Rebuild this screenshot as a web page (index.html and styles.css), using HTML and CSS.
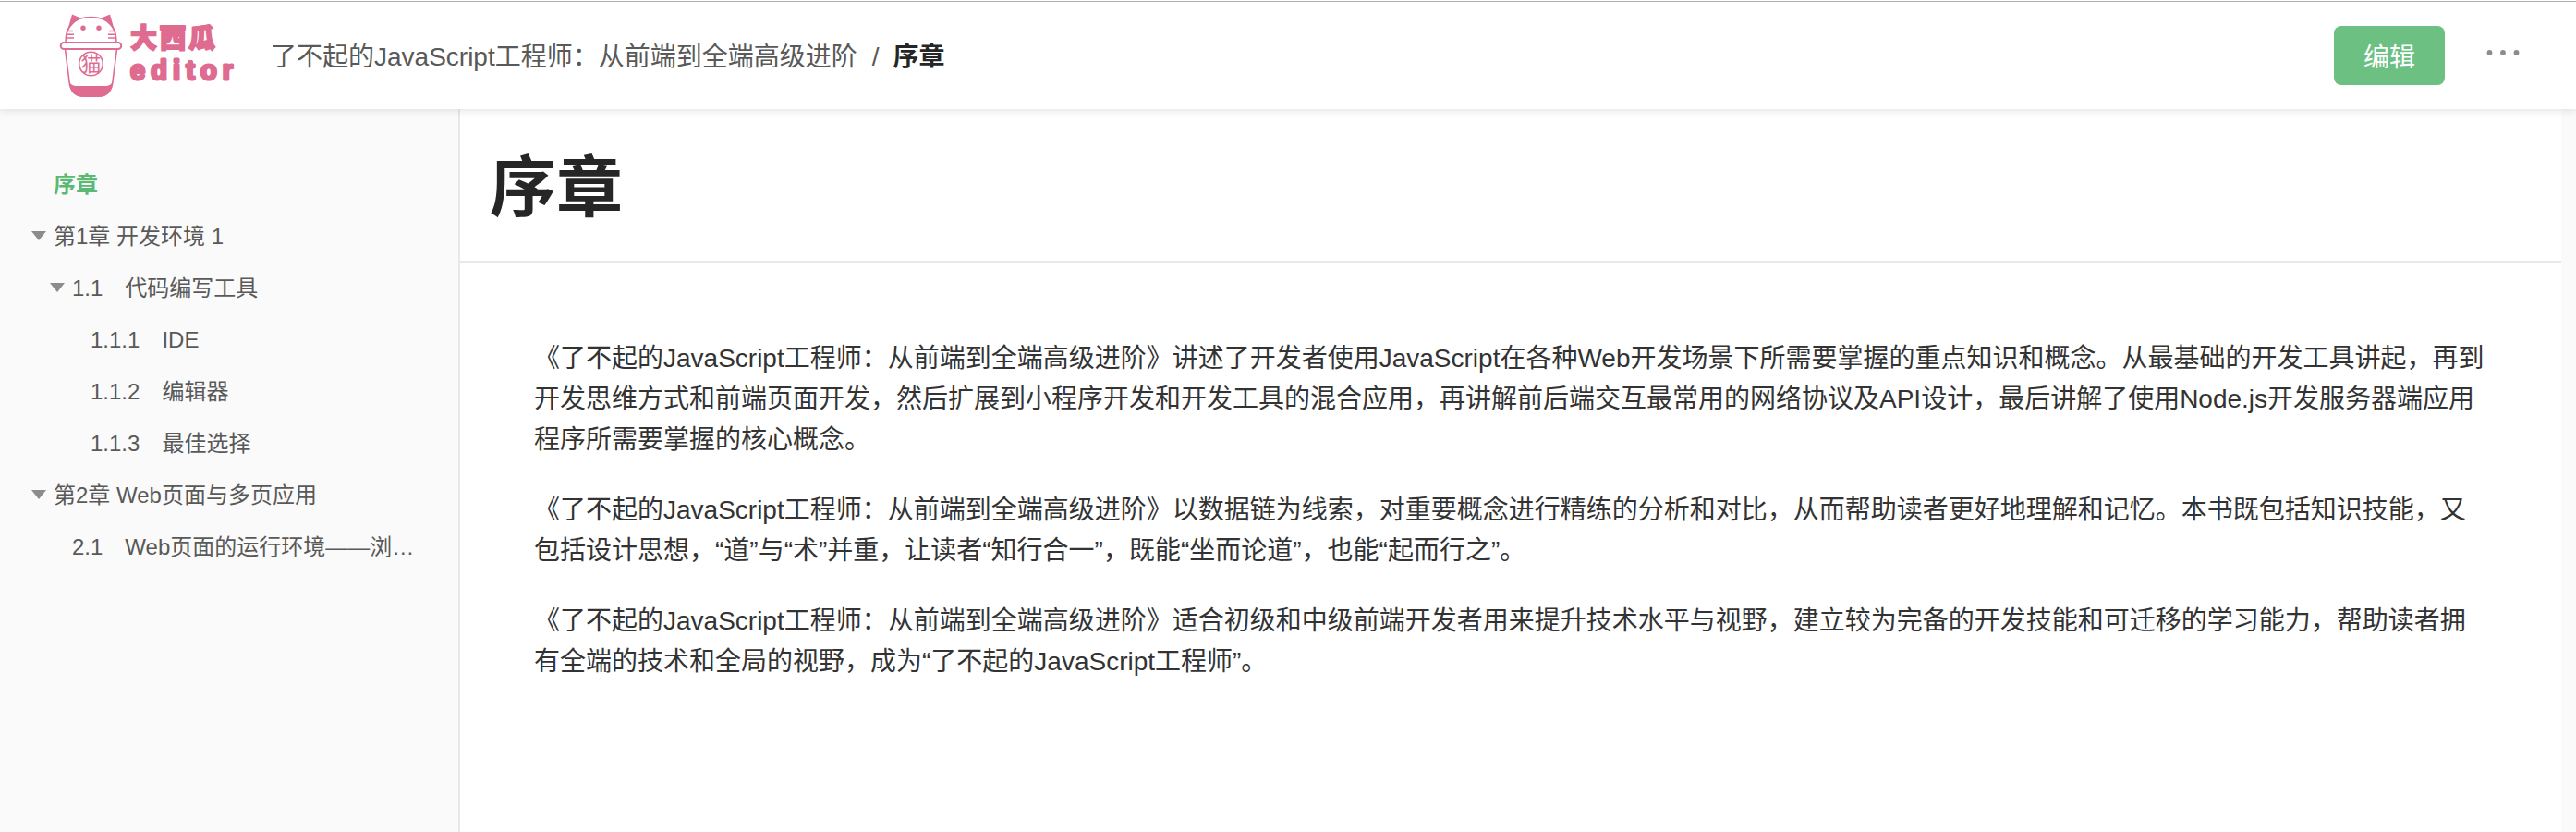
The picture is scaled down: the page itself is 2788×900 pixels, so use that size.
FILE: index.html
```html
<!DOCTYPE html>
<html lang="zh-CN">
<head>
<meta charset="utf-8">
<title>序章</title>
<link rel="stylesheet" href="styles.css">
</head>
<body>
<header class="header">
  <svg class="logo" width="200" height="100" viewBox="0 0 200 100" role="img" aria-label="大西瓜 editor">
    <g fill="none" stroke="#df6b90" stroke-width="1.600">
      <path d="M11 36C11 17 21 8.500 38.500 8.500S66 17 66 36"/>
      <path d="M10.500 43L15 78C16 89 22 94 30 94H47C55 94 61 89 62 78L66.500 43"/>
      <rect x="5.700" y="36" width="65.500" height="7" rx="3.500" stroke-width="2" fill="#fff"/>
      <circle cx="38.500" cy="59" r="12.800"/>
      <path d="M13 23.500H19M11 27.300H20M12 31H20M58 23.500H64M57 27.300H66M57 31H65" stroke-width="1.500"/>
    </g>
    <g fill="#df6b90">
      <path d="M12 27L18 5.500L28.500 10C20 13.500 16 18 12 27ZM65 27L59 5.500L48.500 10C57 13.500 61 18 65 27Z"/>
      <circle cx="30" cy="20.300" r="2.700"/>
      <circle cx="47" cy="20.300" r="2.700"/>
      <path d="M14.500 78Q17 83 23 83H54Q60 83 62.500 78C61 90 55 95 47 95H30C22 95 16 90 14.500 78Z"/>
      <text class="logo-seal" x="27.500" y="67">猫</text>
      <text class="logo-cn" x="81" y="41.500" textLength="92">大西瓜</text>
      <text class="logo-en" x="81" y="76" textLength="111">editor</text>
    </g>
  </svg>
  <nav class="crumbs">
    <span>了不起的JavaScript工程师：从前端到全端高级进阶</span>
    <span class="slash">/</span>
    <b>序章</b>
  </nav>
  <button class="edit">编辑</button>
  <svg class="more" width="36" height="8" viewBox="0 0 36 8" fill="#8c8c8c">
    <circle cx="3.500" cy="4" r="2.900"/><circle cx="18" cy="4" r="2.900"/><circle cx="32.500" cy="4" r="2.900"/>
  </svg>
</header>
<div class="layout">
  <aside class="sidebar">
    <ul class="toc">
      <li class="item active"><span class="label">序章</span></li>
      <li class="item open"><span class="label">第1章 开发环境 1</span></li>
      <li class="item open level2"><span class="label">1.1　代码编写工具</span></li>
      <li class="item level3"><span class="label">1.1.1　IDE</span></li>
      <li class="item level3"><span class="label">1.1.2　编辑器</span></li>
      <li class="item level3"><span class="label">1.1.3　最佳选择</span></li>
      <li class="item open"><span class="label">第2章 Web页面与多页应用</span></li>
      <li class="item level2"><span class="label">2.1　Web页面的运行环境——浏…</span></li>
    </ul>
  </aside>
  <main class="doc">
    <h1 class="title">序章</h1>
    <article class="body">
      <p>《了不起的JavaScript工程师：从前端到全端高级进阶》讲述了开发者使用JavaScript在各种Web开发场景下所需要掌握的重点知识和概念。从最基础的开发工具讲起，再到开发思维方式和前端页面开发，然后扩展到小程序开发和开发工具的混合应用，再讲解前后端交互最常用的网络协议及API设计，最后讲解了使用Node.js开发服务器端应用程序所需要掌握的核心概念。</p>
      <p>《了不起的JavaScript工程师：从前端到全端高级进阶》以数据链为线索，对重要概念进行精练的分析和对比，从而帮助读者更好地理解和记忆。本书既包括知识技能，又包括设计思想，“道”与“术”并重，让读者“知行合一”，既能“坐而论道”，也能“起而行之”。</p>
      <p>《了不起的JavaScript工程师：从前端到全端高级进阶》适合初级和中级前端开发者用来提升技术水平与视野，建立较为完备的开发技能和可迁移的学习能力，帮助读者拥有全端的技术和全局的视野，成为“了不起的JavaScript工程师”。</p>
    </article>
  </main>
</div>
</body>
</html>
```
FILE: styles.css
```css
* { box-sizing: border-box; }

body {
  margin: 0;
  height: 900px;
  overflow: hidden;
  display: flex;
  flex-direction: column;
  background: #fafafa;
  font-family: "Liberation Sans", "Noto Sans CJK SC", sans-serif;
  text-spacing-trim: space-all;
  text-autospace: no-autospace;
}

.header {
  position: relative;
  z-index: 1;
  flex: none;
  display: flex;
  align-items: center;
  height: 118px;
  padding: 2px 60px 0;
  background: linear-gradient(#fff 1px, #b0b0b0 1px, #b0b0b0 2px, #fff 2px);
  box-shadow: 0 2px 8px rgba(0, 0, 0, 0.11);
}

.logo { flex: none; overflow: visible; }

.logo text { stroke: #df6b90; stroke-linejoin: round; }

.logo-cn { font: 900 29px "Noto Sans CJK SC", sans-serif; stroke-width: 1.800; }
.logo-en { font: 700 29px "Liberation Sans", sans-serif; stroke-width: 3; }
.logo text.logo-seal { font: 400 22px "Noto Sans CJK SC", sans-serif; stroke: none; }

.crumbs {
  display: flex;
  margin-left: 33px;
  padding-top: 4px;
  font-size: 28px;
  line-height: 44px;
  color: #595959;
  white-space: nowrap;
}

.crumbs b { color: #262626; }
.slash { margin: 0 15px 0 16px; }

.edit {
  width: 120px;
  height: 64px;
  margin-left: auto;
  padding: 0;
  border: 0;
  border-radius: 8px;
  background: #6cc182;
  color: #fff;
  font: inherit;
  font-size: 28px;
}

.more { margin: 0 1px 6px 45px; }

.layout {
  flex: 1;
  display: flex;
  min-height: 0;
  padding-right: 16px;
}

.sidebar {
  flex: none;
  width: 498px;
  padding: 51px 42px 0 32px;
  border-right: 2px solid #e8e8e8;
}

.toc { margin: 0; padding: 0; list-style: none; }

.item {
  display: flex;
  align-items: center;
  height: 56px;
  padding-left: 26px;
  font-size: 24px;
  color: #595959;
}

.level2 { padding-left: 46px; }
.level3 { padding-left: 66px; }

.label { white-space: nowrap; }

.open::before {
  content: "";
  flex: none;
  margin: 4px 8px 0 -24px;
  border: 8px solid transparent;
  border-top: 10px solid #8c8c8c;
  border-bottom: 0;
}

.active { color: #5bb974; font-weight: 700; }

.doc { flex: 1; min-width: 0; background: #fff; }

.title {
  height: 166px;
  margin: 0;
  padding: 35px 32px 0;
  border-bottom: 2px solid #e8e8e8;
  font-size: 72px;
  line-height: 100px;
  color: #262626;
}

.body {
  padding: 82px 80px 0;
  font-size: 28px;
  line-height: 44px;
  color: #333;
}

.body p { margin: 0 0 32px; }
```
